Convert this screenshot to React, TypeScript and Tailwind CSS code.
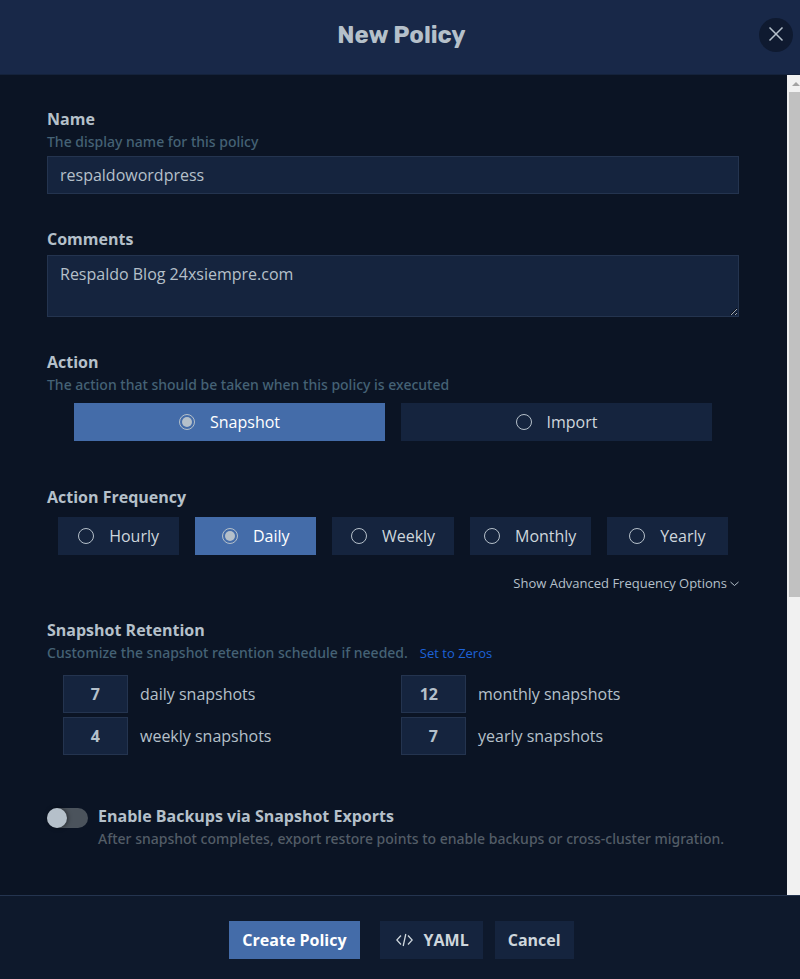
import { useState } from "react";
import type { ReactNode } from "react";

const actions = ["Snapshot", "Import"];
const frequencies = ["Hourly", "Daily", "Weekly", "Monthly", "Yearly"];

const retention = [
  { name: "daily", count: "7" },
  { name: "monthly", count: "12" },
  { name: "weekly", count: "4" },
  { name: "yearly", count: "7" },
];

function classNames(...classes: string[]) {
  return classes.filter(Boolean).join(" ");
}

const Hint = ({ children }: { children: ReactNode }) => (
  <p className="font-['Noto_Sans',sans-serif] text-sm leading-[22px] font-medium text-[#456275]">
    {children}
  </p>
);

type RadioButtonProps = {
  group: string;
  label: string;
  checked: boolean;
  onSelect: (value: string) => void;
};

const RadioButton = ({ group, label, checked, onSelect }: RadioButtonProps) => (
  <label
    className={classNames(
      checked ? "bg-[#446ca9] text-white" : "bg-[#15243e] text-[#ced6dc]",
      "flex h-[38px] cursor-pointer items-center justify-center gap-[15px]"
    )}
  >
    <input
      type="radio"
      name={group}
      value={label}
      checked={checked}
      onChange={() => onSelect(label)}
      className="h-4 w-4 appearance-none rounded-full border border-[#b5c0ca] bg-clip-content p-[2px] checked:bg-[#b5c0ca]"
    />
    {label}
  </label>
);

const Scrollbar = () => (
  <div className="w-[13px] shrink-0 bg-[#f1f1f1] pl-[2px]" aria-hidden="true">
    <svg className="h-[17px] w-full" viewBox="0 0 11 17">
      <path d="M3 11h8L7 7z" fill="#a3a3a3" />
    </svg>
    <div className="h-[505px] bg-[#c1c1c1]" />
  </div>
);

const PolicyForm = () => {
  const [action, setAction] = useState("Snapshot");
  const [frequency, setFrequency] = useState("Daily");
  const [exports, setExports] = useState(false);

  return (
    <form
      id="policy-form"
      className="min-w-0 flex-1 pt-8 pr-12 pb-10 pl-[47px]"
      onSubmit={(e) => e.preventDefault()}
    >
      <label htmlFor="name" className="block font-bold">
        Name
      </label>
      <Hint>The display name for this policy</Hint>
      <input
        id="name"
        type="text"
        defaultValue="respaldowordpress"
        className="mt-[3px] block h-[38px] w-full border border-[#24344f] bg-[#15243e] px-3 outline-none"
      />

      <label htmlFor="comments" className="mt-[33px] block font-bold">
        Comments
      </label>
      <textarea
        id="comments"
        defaultValue="Respaldo Blog 24xsiempre.com"
        className="mt-1 block h-[62px] w-full border border-[#24344f] bg-[#15243e] px-3 py-[6px] outline-none"
      />

      <fieldset className="mt-[33px]">
        <legend className="font-bold">Action</legend>
        <Hint>The action that should be taken when this policy is executed</Hint>
        <div className="mt-[7px] grid grid-cols-2 gap-4 px-[27px]">
          {actions.map((item) => (
            <RadioButton
              key={item}
              group="action"
              label={item}
              checked={item === action}
              onSelect={setAction}
            />
          ))}
        </div>
      </fieldset>

      <fieldset className="mt-11">
        <legend className="font-bold">Action Frequency</legend>
        <div className="mt-2 grid grid-cols-5 gap-4 px-[11px]">
          {frequencies.map((item) => (
            <RadioButton
              key={item}
              group="frequency"
              label={item}
              checked={item === frequency}
              onSelect={setFrequency}
            />
          ))}
        </div>
      </fieldset>

      <div className="mt-[18px] flex justify-end">
        <button
          type="button"
          className="flex items-center gap-[3px] text-[13px] leading-5"
        >
          Show Advanced Frequency Options
          <svg
            className="h-[10px] w-[9px]"
            viewBox="0 0 9 10"
            fill="none"
            stroke="currentColor"
          >
            <path d="M0.5 4l4 3.5 4-3.5" />
          </svg>
        </button>
      </div>

      <fieldset className="mt-[25px]">
        <legend className="font-bold">Snapshot Retention</legend>
        <div className="flex items-center gap-3">
          <Hint>Customize the snapshot retention schedule if needed.</Hint>
          <button type="button" className="text-[13px] leading-5 text-[#1d62d8]">
            Set to Zeros
          </button>
        </div>
        <div className="mt-[11px] grid grid-cols-2 gap-y-1 pl-4">
          {retention.map((item) => (
            <div key={item.name} className="flex items-center gap-3">
              <input
                id={item.name}
                type="text"
                inputMode="numeric"
                defaultValue={item.count}
                className="h-[38px] w-[65px] border border-[#24344f] bg-[#15243e] pr-[27px] text-right font-bold outline-none"
              />
              <label htmlFor={item.name}>{item.name} snapshots</label>
            </div>
          ))}
        </div>
      </fieldset>

      <div className="mt-[49px] flex gap-[10px]">
        <input
          id="exports"
          type="checkbox"
          role="switch"
          checked={exports}
          onChange={(e) => setExports(e.target.checked)}
          className="mt-1 h-5 w-[41px] shrink-0 appearance-none rounded-full bg-[#4b535c] before:block before:h-5 before:w-5 before:rounded-full before:bg-[#b5c0ca] before:shadow-[1px_0_4px_rgba(0,0,0,0.5)] checked:bg-[#446ca9] checked:before:ml-auto"
        />
        <div>
          <label htmlFor="exports" className="block font-bold">
            Enable Backups via Snapshot Exports
          </label>
          <p className="font-['Noto_Sans',sans-serif] text-sm leading-[22px] font-medium text-[#535d67]">
            After snapshot completes, export restore points to enable backups or
            cross-cluster migration.
          </p>
        </div>
      </div>
    </form>
  );
};

const App = () => {
  return (
    <div className="flex min-h-screen flex-col bg-[#0b1424] font-['Open_Sans',sans-serif] text-base leading-6 text-[#b5c0ca]">
      <header className="grid h-[75px] grid-cols-[1fr_auto_1fr] items-center border-b border-[#14223b] bg-[#182848] pb-[5px] pl-[3px]">
        <h1 className="col-start-2 font-[Rubik,Roboto,sans-serif] text-2xl font-bold">
          New Policy
        </h1>
        <button
          type="button"
          aria-label="Close"
          className="mr-[7px] flex h-[34px] w-[34px] items-center justify-center justify-self-end rounded-full bg-[#0f1a30]"
        >
          <svg
            className="h-4 w-4"
            viewBox="0 0 16 16"
            fill="none"
            stroke="currentColor"
            strokeWidth="1.5"
          >
            <path d="M1.5 0.5l13 13M14.5 0.5l-13 13" />
          </svg>
        </button>
      </header>

      <main className="flex flex-1">
        <PolicyForm />
        <Scrollbar />
      </main>

      <footer className="flex items-center justify-center border-t border-[#24344f] bg-[#0e192c] pt-[25px] pb-5 pl-[3px] font-bold">
        <button
          type="submit"
          form="policy-form"
          className="h-[38px] bg-[#446ca9] px-[13px] text-white"
        >
          Create Policy
        </button>
        <button
          type="button"
          className="ml-5 flex h-[38px] items-center gap-[11px] bg-[#15243e] pr-[14px] pl-4 text-[#ced6dc]"
        >
          <svg
            className="h-[14px] w-[17px]"
            viewBox="0 0 17 14"
            fill="none"
            stroke="currentColor"
            strokeWidth="1.3"
          >
            <path d="M5 2.5L0.8 7 5 11.5M12 2.5L16.2 7 12 11.5M9.8 1L7.2 13" />
          </svg>
          YAML
        </button>
        <button
          type="button"
          className="ml-3 h-[38px] bg-[#15243e] px-[13px] text-[#ced6dc]"
        >
          Cancel
        </button>
      </footer>
    </div>
  );
};

export default App;
